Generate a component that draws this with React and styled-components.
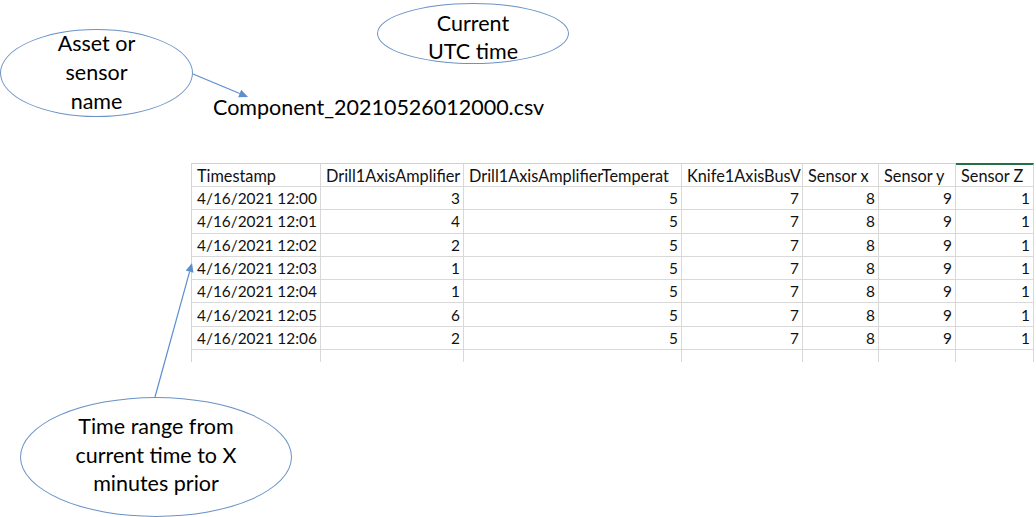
import React from "react";
import styled, { createGlobalStyle } from "styled-components";

const GlobalStyle = createGlobalStyle`
  html, body {
    margin: 0;
    padding: 0;
    background: #ffffff;
  }
  body {
    font-family: Lato, "Open Sans", "Liberation Sans", sans-serif;
    color: #000;
  }
`;

const Canvas = styled.div`
  position: relative;
  width: 1036px;
  height: 517px;
  overflow: hidden;
  background: #fff;
`;

const Bubble = styled.div`
  position: absolute;
  left: ${(p) => p.x}px;
  top: ${(p) => p.y}px;
  width: ${(p) => p.w}px;
  height: ${(p) => p.h}px;
  box-sizing: border-box;
  border: 1px solid #6b93c6;
  border-radius: 50%;
  display: flex;
  align-items: center;
  justify-content: center;
  text-align: center;
  font-size: 21.5px;
  line-height: ${(p) => p.lh || 28}px;
  padding-top: ${(p) => p.pt || 0}px;
  padding-bottom: ${(p) => p.pb || 0}px;
`;

const FileName = styled.div`
  position: absolute;
  left: 213px;
  top: 94px;
  font-size: 21.5px;
  line-height: 26px;
`;

const Arrows = styled.svg`
  position: absolute;
  left: 0;
  top: 0;
  pointer-events: none;
  z-index: 2;
`;

const Sheet = styled.div`
  position: absolute;
  left: 191px;
  top: 163px;
  display: grid;
  grid-template-columns: 129px 143px 218px 121px 76px 77px 78px;
  grid-template-rows: 24px repeat(7, 23.3px) 12px;
  border-left: 1px solid #d4d4d4;
  font-size: 15.4px;
  color: #111;
`;

const Cell = styled.div`
  box-sizing: border-box;
  border-right: 1px solid #d9d9d9;
  border-bottom: ${(p) => (p.last ? "none" : "1px solid #d9d9d9")};
  border-top: ${(p) =>
    p.head ? (p.active ? "2px solid #217346" : "1px solid #d0d0d0") : "none"};
  font-size: ${(p) => (p.head ? "16.3px" : "inherit")};
  padding: 0 3px 0 5px;
  display: flex;
  align-items: center;
  justify-content: ${(p) => (p.num ? "flex-end" : "flex-start")};
  white-space: nowrap;
  overflow: hidden;
`;

const headers = [
  "Timestamp",
  "Drill1AxisAmplifier",
  "Drill1AxisAmplifierTemperat",
  "Knife1AxisBusV",
  "Sensor x",
  "Sensor y",
  "Sensor Z",
];

const rows = [
  ["4/16/2021 12:00", 3, 5, 7, 8, 9, 1],
  ["4/16/2021 12:01", 4, 5, 7, 8, 9, 1],
  ["4/16/2021 12:02", 2, 5, 7, 8, 9, 1],
  ["4/16/2021 12:03", 1, 5, 7, 8, 9, 1],
  ["4/16/2021 12:04", 1, 5, 7, 8, 9, 1],
  ["4/16/2021 12:05", 6, 5, 7, 8, 9, 1],
  ["4/16/2021 12:06", 2, 5, 7, 8, 9, 1],
];

function Arrow({ x1, y1, x2, y2 }) {
  const a = Math.atan2(y2 - y1, x2 - x1);
  const len = 9;
  const wide = 4;
  const bx = x2 - len * Math.cos(a);
  const by = y2 - len * Math.sin(a);
  const px = -Math.sin(a) * wide;
  const py = Math.cos(a) * wide;
  return (
    <g>
      <line x1={x1} y1={y1} x2={bx} y2={by} stroke="#5b8fcd" strokeWidth="1.2" />
      <polygon
        points={`${x2},${y2} ${bx + px},${by + py} ${bx - px},${by - py}`}
        fill="#5b8fcd"
      />
    </g>
  );
}

export default function App() {
  return (
    <Canvas>
      <GlobalStyle />
      <Bubble x={0} y={29} w={193} h={88} lh={29} pb={2}>
        Asset or
        <br />
        sensor
        <br />
        name
      </Bubble>
      <Bubble x={377} y={3} w={192} h={61} lh={28} pt={6}>
        Current
        <br />
        UTC time
      </Bubble>
      <FileName>Component_20210526012000.csv</FileName>

      <Sheet>
        {headers.map((h, i) => (
          <Cell key={h} head active={i === 6}>
            {h}
          </Cell>
        ))}
        {rows.map((r) =>
          r.map((v, i) => (
            <Cell key={r[0] + i} num={i > 0}>
              {v}
            </Cell>
          ))
        )}
        {headers.map((h) => (
          <Cell key={"e" + h} last />
        ))}
      </Sheet>

      <Bubble x={20} y={397} w={272} h={120} lh={28.5} pb={4}>
        Time range from
        <br />
        current time to X
        <br />
        minutes prior
      </Bubble>

      <Arrows width="1036" height="517">
        <Arrow x1={193} y1={74} x2={248} y2={97} />
        <Arrow x1={155} y1={397} x2={192} y2={263} />
      </Arrows>
    </Canvas>
  );
}
